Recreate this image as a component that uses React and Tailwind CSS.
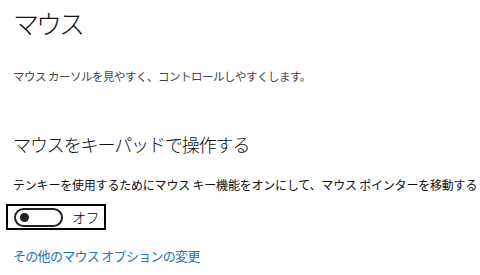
export default function App() {
  return (
    <div
      className="w-[480px] h-[275px] bg-white text-black overflow-hidden pl-[13px] pt-[6px]"
      style={{ fontFamily: '"Noto Sans CJK JP", "Noto Sans", sans-serif' }}
    >
      <h1 className="text-[26px] leading-[34px] font-light tracking-[-3px] text-[#111]">マウス</h1>
      <p className="mt-[28px] text-[11.5px] leading-[16px] text-[#444] tracking-[-0.5px]">
        マウス カーソルを見やすく、コントロールしやすくします。
      </p>

      <h2 className="mt-[48px] text-[18px] leading-[24px] font-light tracking-[-1.1px] text-[#111]">
        マウスをキーパッドで操作する
      </h2>
      <p className="mt-[21px] text-[12px] leading-[16px] tracking-[-0.2px] whitespace-nowrap text-[#111]">
        テンキーを使用するためにマウス キー機能をオンにして、マウス ポインターを移動する
      </p>

      <div className="mt-[11px] -ml-[7px] w-[100px] h-[26px] border-2 border-black flex items-center pl-[6px] gap-[9px]">
        <div className="w-[49px] h-[19px] rounded-full border-2 border-[#222] flex items-center pl-[4px]">
          <div className="w-[9px] h-[9px] rounded-full bg-[#222]" />
        </div>
        <span className="text-[14px] leading-none font-light tracking-[-0.5px]">オフ</span>
      </div>

      <a className="block mt-[17px] text-[13px] leading-[18px] text-[#2a72b5] tracking-[-0.7px]">
        その他のマウス オプションの変更
      </a>
    </div>
  );
}
